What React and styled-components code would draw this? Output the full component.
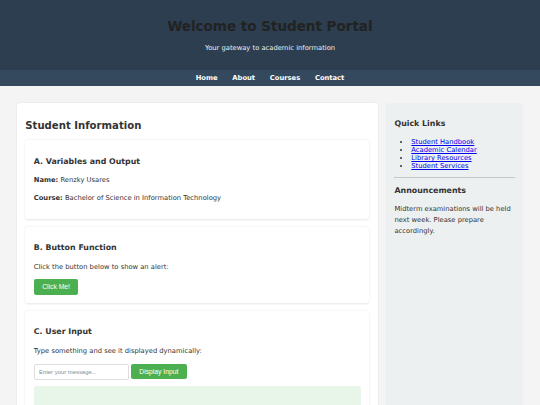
import React from "react";
import styled, { createGlobalStyle } from "styled-components";

const GlobalStyle = createGlobalStyle`
  body {
    margin: 0;
    background: #f4f4f4;
    font-family: "DejaVu Sans", Verdana, sans-serif;
    color: #333;
  }
`;

// the page is laid out at 1280px and shown in the 540px window
const Page = styled.div`
  width: 1280px;
  zoom: 0.421875;
`;

const Header = styled.header`
  background: #2c3e50;
  padding: 22px 0 21px;
  text-align: center;
`;

const Title = styled.h1`
  font-size: 32px;
  margin: 0.67em 0;
  line-height: normal;
  color: #222;
`;

const Tagline = styled.p`
  margin: 16px 0;
  line-height: 1.6;
  color: #ecf0f1;
`;

const Nav = styled.nav`
  background: #34495e;
  padding: 10px;
  display: flex;
  justify-content: center;
  gap: 35px;
`;

const NavLink = styled.a`
  color: #fff;
  font-weight: bold;
  text-decoration: none;
`;

const Container = styled.div`
  max-width: 1200px;
  margin: 40px auto;
  display: grid;
  grid-template-columns: 1fr 325px;
  gap: 20px;
  align-items: stretch;
`;

const Main = styled.main`
  background: #fff;
  padding: 20px;
  border-radius: 8px;
  box-shadow: 0 2px 5px rgba(0, 0, 0, 0.1);
`;

const Heading = styled.h2`
  font-size: 24px;
  margin: 0.83em 0;
  line-height: 1.2;
`;

const Section = styled.section`
  background: #fff;
  padding: 20px;
  margin-bottom: 19px;
  border-radius: 8px;
  box-shadow: 0 2px 6px rgba(0, 0, 0, 0.1);
`;

const SubHeading = styled.h3`
  font-size: 1.17em;
  margin: 1em 0;
  line-height: 1.35;
`;

const Text = styled.p`
  margin: 1em 0;
  line-height: 1.6;
`;

const Button = styled.button`
  background: #4caf50;
  color: #fff;
  border: none;
  padding: 10px 20px;
  border-radius: 5px;
  font: 16px "Liberation Sans", Arial, sans-serif;
  cursor: pointer;
`;

const InputRow = styled.div`
  display: flex;
  align-items: flex-start;
  gap: 5.5px;
`;

const Input = styled.input`
  width: 200px;
  padding: 10px;
  border: 1px solid #ddd;
  border-radius: 5px;
  font: 14px "Liberation Sans", Arial, sans-serif;
  &::placeholder {
    color: #8a8a8a;
  }
`;

const Output = styled.div`
  margin-top: 15px;
  padding: 15px;
  min-height: 60px;
  background: #e8f5e9;
  border-radius: 5px;
`;

const Sidebar = styled.aside`
  background: #ecf0f1;
  padding: 20px;
  border-radius: 8px;
`;

const LinkList = styled.ul`
  margin: 0.8em 0;
  padding-left: 40px;
  a {
    color: #0000ee;
  }
`;

const Rule = styled.hr`
  border: none;
  border-top: 1px solid #c5c9cb;
  margin: 16px 0;
`;

const links = ["Student Handbook", "Academic Calendar", "Library Resources", "Student Services"];

export default function App() {
  return (
    <>
      <GlobalStyle />
      <Page>
        <Header>
          <Title>Welcome to Student Portal</Title>
          <Tagline>Your gateway to academic information</Tagline>
        </Header>
        <Nav>
          <NavLink href="#">Home</NavLink>
          <NavLink href="#">About</NavLink>
          <NavLink href="#">Courses</NavLink>
          <NavLink href="#">Contact</NavLink>
        </Nav>
        <Container>
          <Main>
            <Heading>Student Information</Heading>
            <Section>
              <SubHeading>A. Variables and Output</SubHeading>
              <Text><strong>Name:</strong> Renzky Usares</Text>
              <Text><strong>Course:</strong> Bachelor of Science in Information Technology</Text>
            </Section>
            <Section>
              <SubHeading>B. Button Function</SubHeading>
              <Text>Click the button below to show an alert:</Text>
              <Button onClick={() => alert("Hello!")}>Click Me!</Button>
            </Section>
            <Section>
              <SubHeading>C. User Input</SubHeading>
              <Text>Type something and see it displayed dynamically:</Text>
              <InputRow>
                <Input placeholder="Enter your message..." />
                <Button>Display Input</Button>
              </InputRow>
              <Output />
            </Section>
          </Main>
          <Sidebar>
            <SubHeading>Quick Links</SubHeading>
            <LinkList>
              {links.map((l) => (
                <li key={l}><a href="#">{l}</a></li>
              ))}
            </LinkList>
            <Rule />
            <SubHeading>Announcements</SubHeading>
            <Text>Midterm examinations will be held next week. Please prepare accordingly.</Text>
          </Sidebar>
        </Container>
      </Page>
    </>
  );
}
